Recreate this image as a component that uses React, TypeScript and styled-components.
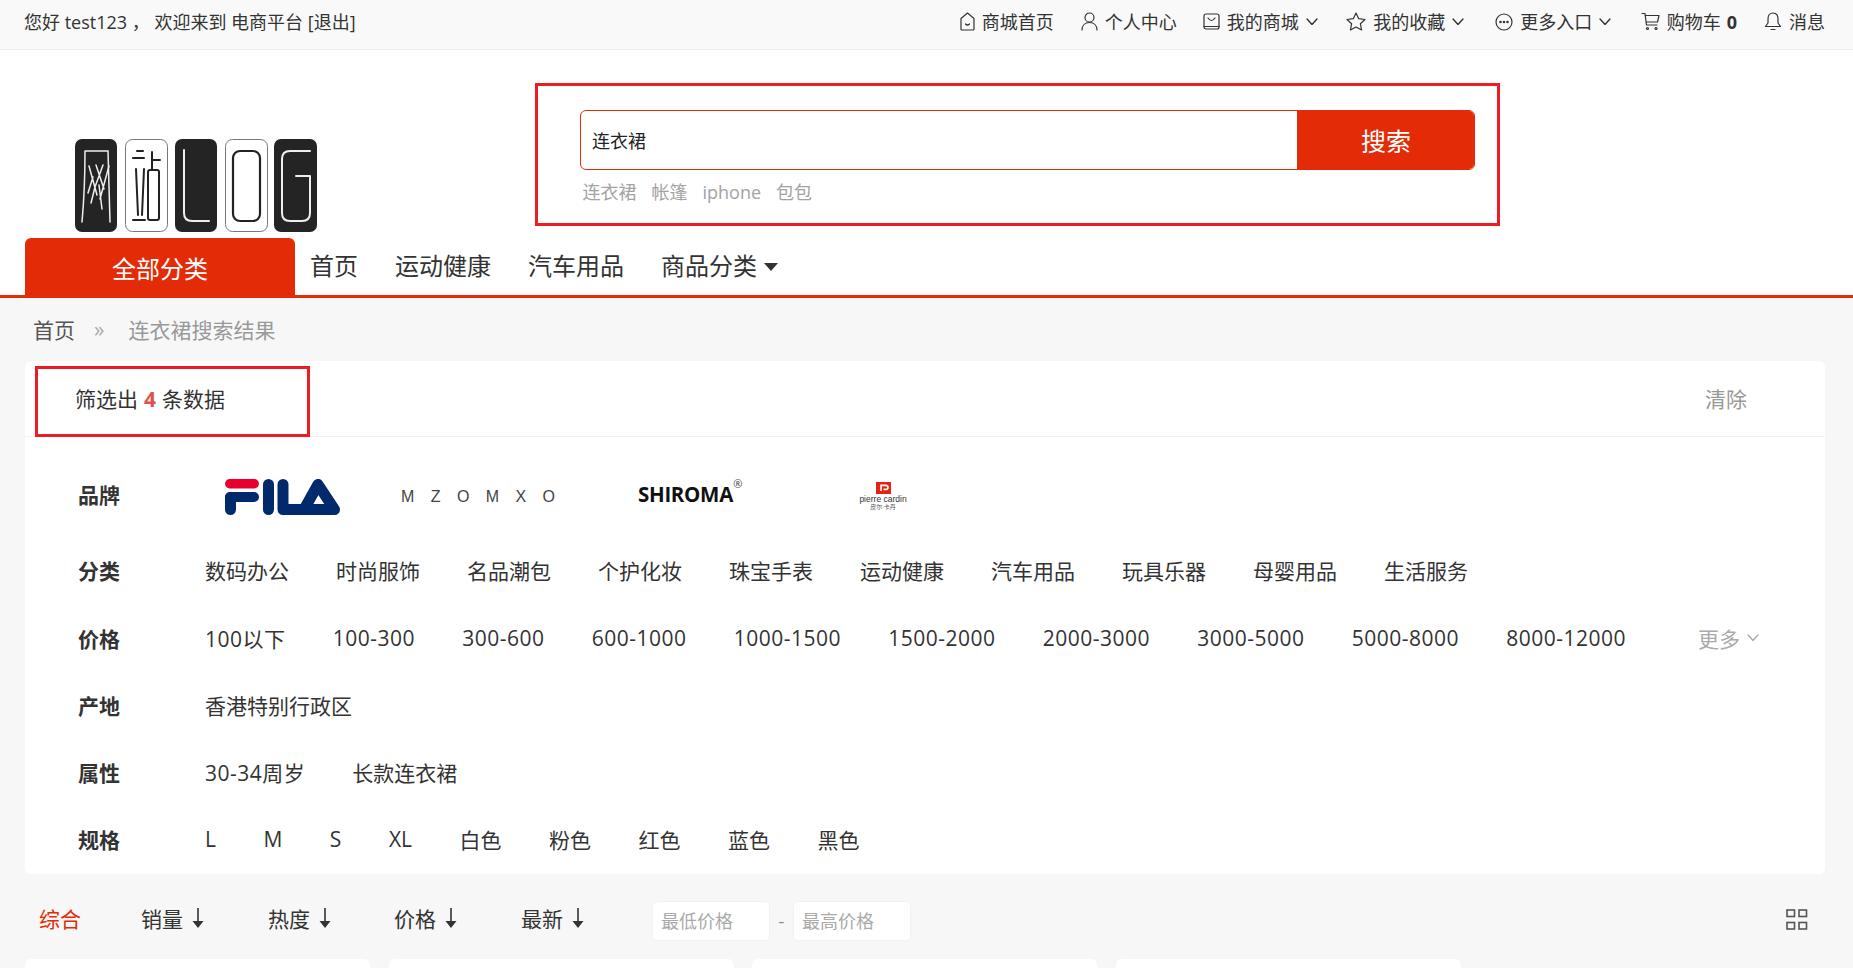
import React from "react";
import styled, { createGlobalStyle } from "styled-components";

const RED = "#e32c07";
const FONT = `"Open Sans", "Noto Sans CJK SC", sans-serif`;

const Global = createGlobalStyle`
  html, body { margin: 0; padding: 0; height: 100%; overflow: hidden; background: #f7f7f7; }
  body { font-family: ${FONT}; color: #333; }
  * { box-sizing: border-box; }
`;

const TopBar = styled.div`
  height: 50px; background: #f9f9f9; border-bottom: 1px solid #eee;
  display: flex; align-items: center; justify-content: space-between;
  padding: 0 28px 6px 24px; font-size: 18px; line-height: 26px;
`;
const TopLinks = styled.div`display: flex; align-items: center;`;
const TopLink = styled.span<{ $after?: number }>`
  display: inline-flex; align-items: center; gap: 7px;
  margin-right: ${(p) => p.$after ?? 0}px;
  svg { flex: none; }
`;
const Count = styled.b`font-weight: 700; margin-left: -1px;`;

const Header = styled.header`
  background: #fff; border-bottom: 3px solid ${RED}; padding: 0 0 0 25px;
`;
const HeaderMain = styled.div`display: flex; height: 188px;`;
const LogoBox = styled.div`margin: 89px 0 0 50px; width: 242px; height: 94px;`;
const SearchFrame = styled.div`
  margin: 33px 0 0 218px; width: 965px; height: 143px;
  border: 3px solid #ec1c24; padding: 24px 22px 0 42px;
`;
const SearchRow = styled.div`
  display: flex; height: 60px; border: 1px solid ${RED}; border-radius: 6px; overflow: hidden;
`;
const SearchText = styled.div`
  flex: 1; font-size: 18px; line-height: 60px; padding-left: 11px; color: #222;
`;
const SearchButton = styled.div`
  width: 178px; margin: -1px; background: ${RED}; color: #fff;
  font-size: 25px; line-height: 62px; text-align: center;
`;
const HotWords = styled.div`
  display: flex; gap: 15px; font-size: 18px; line-height: 26px; color: #a3a3a3;
  padding: 9px 0 0 2.5px;
`;
const NavRow = styled.nav`display: flex; align-items: center; height: 57px;`;
const AllCats = styled.div`
  width: 270px; height: 57px; background: ${RED}; color: #fff; border-radius: 6px 6px 0 0;
  text-align: center; font-size: 24px; line-height: 62px; margin-right: 15px;
`;
const NavItem = styled.span`
  font-size: 24px; line-height: 34px; color: #333; margin-right: 37px;
  display: inline-flex; align-items: center; position: relative; top: -1px;
`;
const Caret = styled.i`
  width: 0; height: 0; margin-left: 7px; margin-top: 2px;
  border-left: 7px solid transparent; border-right: 7px solid transparent; border-top: 8px solid #333;
`;

const Crumbs = styled.div`
  display: flex; align-items: center; height: 63px; padding: 0 0 1px 33px; font-size: 21px; color: #999;
`;
const CrumbHome = styled.span`color: #555;`;
const CrumbSep = styled.span`margin: 0 24px 0 19px; color: #aaa;`;

const Panel = styled.section`
  margin: 0 28px 0 25px; height: 513px; background: #fff; border-radius: 6px;
`;
const PanelHead = styled.div`
  position: relative; height: 76px; border-bottom: 1px solid #f1f1f1;
  display: flex; align-items: center; justify-content: space-between;
  padding: 0 78px 2px 50px; font-size: 21px;
`;
const HeadFrame = styled.div`
  position: absolute; left: 10px; top: 5px; width: 275px; height: 71px; border: 3px solid #ec1c24;
`;
const Num = styled.b`color: #e0514c; font-weight: 700; margin: 0 6px;`;
const Clear = styled.span`color: #999;`;
const PanelBody = styled.div`padding-top: 23px;`;
const Row = styled.div<{ $brand?: boolean }>`
  display: flex; align-items: center; height: 67.25px; padding: 0 66px 0 53px; font-size: 21px;
  white-space: nowrap;
  margin-bottom: ${(p) => (p.$brand ? 9.5 : 0)}px;
`;
const RowLabel = styled.span`width: 127px; flex: none; font-weight: 700;`;
const Values = styled.div<{ $gap?: number }>`
  display: flex; align-items: center; gap: ${(p) => p.$gap ?? 47}px; flex: 1;
`;
const Price = styled.span`letter-spacing: 0.5px;`;
const More = styled.span`
  margin-left: auto; color: #aaa; display: inline-flex; align-items: center; gap: 7px;
`;
const BrandList = styled.div`display: flex; align-items: center; height: 60px; flex: 1;`;
const BrandSlot = styled.div<{ $w: number; $down?: number }>`
  width: ${(p) => p.$w}px; flex: none; display: flex; align-items: center;
  padding-top: ${(p) => p.$down ?? 0}px;
`;
const Mzomxo = styled.span`
  font-family: "Liberation Sans", sans-serif; font-size: 16px; letter-spacing: 16.4px; color: #444; white-space: nowrap;
`;
const Shiroma = styled.span`
  font-family: "Open Sans", sans-serif; font-weight: 700; font-size: 20.5px; line-height: 15px; letter-spacing: -.3px; color: #111; position: relative;
`;
const Reg = styled.sup`position: absolute; right: -9px; top: -9px; font-size: 11px; font-weight: 400; line-height: 11px; color: #444;`;
const Pc = styled.div`display: flex; flex-direction: column; align-items: center; width: 44px;`;
const PcName = styled.span`font-family: "Liberation Sans", sans-serif; font-size: 8.5px; line-height: 9px; color: #333; white-space: nowrap; margin-top: 1px;`;
const PcCn = styled.span`font-size: 6px; line-height: 7px; color: #555; white-space: nowrap;`;

const SortBar = styled.div`
  display: flex; align-items: center; height: 84px; margin: 0 45px 0 39px; padding-top: 9px; font-size: 21px;
`;
const SortItem = styled.span<{ $active?: boolean; $w: number }>`
  width: ${(p) => p.$w}px; flex: none; display: inline-flex; align-items: center; gap: 9px;
  padding-bottom: 6px;
  color: ${(p) => (p.$active ? RED : "#333")};
`;
const PriceBox = styled.div`
  width: 118px; height: 40px; background: #fff; border: 1px solid #f2f2f2; border-radius: 5px;
  font-size: 18px; line-height: 38px; color: #aaa; padding-left: 8px;
`;
const Dash = styled.span`width: 23px; text-align: center; color: #888; font-size: 18px;`;
const GridIcon = styled.span`margin-left: auto; display: flex; padding-bottom: 2px;`;

const Cards = styled.div`display: flex; gap: 18.5px; margin: 1px 0 0 25px;`;
const Card = styled.div`width: 345px; height: 300px; background: #fff; border-radius: 6px;`;

const line = { fill: "none", stroke: "#333", strokeWidth: 1.2, strokeLinecap: "round", strokeLinejoin: "round" } as const;

const HomeIcon = () => (
  <svg width="15" height="19" viewBox="0 0 15 19" {...line}>
    <path d="M7.5 1 L14 6.5 V17 Q14 18 13 18 H2 Q1 18 1 17 V6.5 Z" />
    <path d="M5.5 12 Q7.5 14 9.5 12" />
  </svg>
);
const UserIcon = () => (
  <svg width="17" height="19" viewBox="0 0 17 19" {...line}>
    <circle cx="8.5" cy="5.5" r="4.5" />
    <path d="M1 18 C1 13.5 4 10.5 8.5 10.5 S16 13.5 16 18" />
  </svg>
);
const BagIcon = () => (
  <svg width="17" height="17" viewBox="0 0 17 17" {...line}>
    <rect x="1" y="1" width="15" height="15" rx="2" />
    <path d="M5 5 Q8.5 10 12 5" />
    <path d="M1 13.5 H16" />
  </svg>
);
const StarIcon = () => (
  <svg width="20" height="19" viewBox="0 0 20 19" {...line}>
    <path d="M10 1 L12.7 6.7 L19 7.5 L14.4 11.8 L15.6 18 L10 15 L4.4 18 L5.6 11.8 L1 7.5 L7.3 6.7 Z" />
  </svg>
);
const MoreIcon = () => (
  <svg width="18" height="18" viewBox="0 0 18 18" {...line}>
    <circle cx="9" cy="9" r="8" />
    <circle cx="5.5" cy="9" r=".7" fill="#333" />
    <circle cx="9" cy="9" r=".7" fill="#333" />
    <circle cx="12.5" cy="9" r=".7" fill="#333" />
  </svg>
);
const CartIcon = () => (
  <svg width="19" height="19" viewBox="0 0 19 19" {...line}>
    <path d="M1 1.5 H4 L5.5 13 H16" />
    <path d="M4.3 3.5 H18 L16.5 10 H5.2" />
    <circle cx="6.5" cy="16.5" r="1" />
    <circle cx="15" cy="16.5" r="1" />
  </svg>
);
const BellIcon = () => (
  <svg width="18" height="19" viewBox="0 0 18 19" {...line}>
    <path d="M9 1 C5 1 4 4 4 7 V11 L1.5 14.5 H16.5 L14 11 V7 C14 4 13 1 9 1 Z" />
    <path d="M7 17.5 H11" />
  </svg>
);
const Chevron = ({ color = "#333", w = 12 }: { color?: string; w?: number }) => (
  <svg width={w} height={w * 0.62} viewBox="0 0 12 7.5" fill="none" stroke={color} strokeWidth="1.4" strokeLinecap="round" strokeLinejoin="round">
    <path d="M1 1 L6 6.5 L11 1" />
  </svg>
);
const DownArrow = () => (
  <svg width="12" height="20" viewBox="0 0 12 20">
    <rect x="5.2" y="0" width="1.6" height="14" fill="#333" />
    <path d="M0.5 13 H11.5 L6 20 Z" fill="#333" />
  </svg>
);
const Grid = () => (
  <svg width="22" height="21" viewBox="0 0 22 21" fill="none" stroke="#555" strokeWidth="1.6">
    <rect x="1" y="1" width="7.5" height="6.5" />
    <rect x="13" y="1" width="7.5" height="6.5" />
    <rect x="1" y="13.5" width="7.5" height="6.5" />
    <rect x="13" y="13.5" width="7.5" height="6.5" />
  </svg>
);

const Logo = () => (
  <svg width="242" height="94" viewBox="0 0 242 94" fill="none" role="img" aria-label="网站LOG">
    <rect x="0" y="0" width="42" height="93" rx="7" fill="#242424" />
    <rect x="50.5" y="0.5" width="42" height="92" rx="7" fill="#fff" stroke="#777" />
    <rect x="100" y="0" width="42" height="93" rx="7" fill="#242424" />
    <rect x="150.5" y="0.5" width="42" height="92" rx="7" fill="#fff" stroke="#777" />
    <rect x="199" y="0" width="43" height="93" rx="7" fill="#242424" />
    <g stroke="#eee" strokeWidth="1.5" strokeLinecap="round">
      <path d="M10 12 H33 L35 83 M10 12 Q10 50 7 83" />
      <path d="M14 27 L22 56 M21 26 L29 50 M28 26 L20 48 L16 64 M34 27 L25 60 M18 38 L13 54 M24 46 L27 70" />
    </g>
    <g stroke="#222" strokeWidth="2" strokeLinecap="round" strokeLinejoin="round">
      <path d="M62 12 H68 M58 19 H69 M61 30 L63 76 M69 30 L67 76 M58 81 H70" />
      <path d="M77 13 V30 M77 21 H85" />
      <rect x="73" y="31" width="11" height="50" rx="2" />
    </g>
    <path d="M109 11 V74 Q109 82 117 82 H134" stroke="#eee" strokeWidth="2" strokeLinecap="round" />
    <rect x="158" y="12" width="27" height="70" rx="7" stroke="#222" strokeWidth="2.2" />
    <path d="M235 12 H215 Q207 12 207 20 V74 Q207 82 215 82 H227 Q235 82 235 74 V37 H221" stroke="#eee" strokeWidth="2" strokeLinecap="round" strokeLinejoin="round" />
  </svg>
);

const Fila = () => (
  <svg width="115" height="36" viewBox="0 0 115 36" role="img" aria-label="FILA">
    <rect x="0" y="0" width="34" height="9.5" rx="4.7" fill="#e8002d" />
    <g fill="#002a6b">
      <rect x="0" y="13" width="34" height="10" rx="5" />
      <rect x="0" y="13" width="11" height="23" rx="5.5" />
      <rect x="38" y="0" width="11" height="36" rx="5.5" />
    </g>
    <polyline points="58,5.5 58,30.5 109.5,30.5 93,5.5 79,30.5" fill="none" stroke="#002a6b" strokeWidth="11" strokeLinejoin="round" strokeLinecap="round" />
  </svg>
);

const PcMark = () => (
  <svg width="15" height="12" viewBox="0 0 15 12">
    <rect width="15" height="12" fill="#e42313" />
    <path d="M5 9 V3.4 H9.5 Q12 3.4 12 5.4 Q12 7.4 9.5 7.4 H7.5" fill="none" stroke="#fff" strokeWidth="1.6" />
  </svg>
);

const TopNav = [
  { icon: <HomeIcon />, label: "商城首页", after: 27 },
  { icon: <UserIcon />, label: "个人中心", after: 26 },
  { icon: <BagIcon />, label: "我的商城", more: true, after: 28.5 },
  { icon: <StarIcon />, label: "我的收藏", more: true, after: 31 },
  { icon: <MoreIcon />, label: "更多入口", more: true, after: 29.5 },
];

const cats = ["数码办公", "时尚服饰", "名品潮包", "个护化妆", "珠宝手表", "运动健康", "汽车用品", "玩具乐器", "母婴用品", "生活服务"];
const prices = ["100以下", "100-300", "300-600", "600-1000", "1000-1500", "1500-2000", "2000-3000", "3000-5000", "5000-8000", "8000-12000"];
const specs = ["L", "M", "S", "XL", "白色", "粉色", "红色", "蓝色", "黑色"];

export default function App() {
  return (
    <>
      <Global />
      <TopBar>
        <span>您好 test123 ， 欢迎来到 电商平台 [退出]</span>
        <TopLinks>
          {TopNav.map((n) => (
            <TopLink key={n.label} $after={n.after}>
              {n.icon}
              {n.label}
              {n.more && <Chevron />}
            </TopLink>
          ))}
          <TopLink $after={27}>
            <CartIcon />
            购物车 <Count>0</Count>
          </TopLink>
          <TopLink>
            <BellIcon />
            消息
          </TopLink>
        </TopLinks>
      </TopBar>
      <Header>
        <HeaderMain>
          <LogoBox><Logo /></LogoBox>
          <SearchFrame>
            <SearchRow>
              <SearchText>连衣裙</SearchText>
              <SearchButton>搜索</SearchButton>
            </SearchRow>
            <HotWords>
              <span>连衣裙</span><span>帐篷</span><span>iphone</span><span>包包</span>
            </HotWords>
          </SearchFrame>
        </HeaderMain>
        <NavRow>
          <AllCats>全部分类</AllCats>
          <NavItem>首页</NavItem>
          <NavItem>运动健康</NavItem>
          <NavItem>汽车用品</NavItem>
          <NavItem>商品分类<Caret /></NavItem>
        </NavRow>
      </Header>
      <Crumbs>
        <CrumbHome>首页</CrumbHome><CrumbSep>»</CrumbSep><span>连衣裙搜索结果</span>
      </Crumbs>
      <Panel>
        <PanelHead>
          <HeadFrame />
          <span>筛选出<Num>4</Num>条数据</span>
          <Clear>清除</Clear>
        </PanelHead>
        <PanelBody>
          <Row $brand>
            <RowLabel>品牌</RowLabel>
            <BrandList>
              <BrandSlot $w={20} />
              <BrandSlot $w={176} $down={6}><Fila /></BrandSlot>
              <BrandSlot $w={237} $down={6}><Mzomxo>MZOMXO</Mzomxo></BrandSlot>
              <BrandSlot $w={223} $down={2}><Shiroma>SHIROMA<Reg>®</Reg></Shiroma></BrandSlot>
              <BrandSlot $w={60} $down={5}>
                <Pc><PcMark /><PcName>pierre cardin</PcName><PcCn>皮尔·卡丹</PcCn></Pc>
              </BrandSlot>
            </BrandList>
          </Row>
          <Row>
            <RowLabel>分类</RowLabel>
            <Values>{cats.map((c) => <span key={c}>{c}</span>)}</Values>
          </Row>
          <Row>
            <RowLabel>价格</RowLabel>
            <Values $gap={47.2}>
              {prices.map((c) => <Price key={c}>{c}</Price>)}
              <More>更多<Chevron color="#aaa" w={12} /></More>
            </Values>
          </Row>
          <Row>
            <RowLabel>产地</RowLabel>
            <Values><span>香港特别行政区</span></Values>
          </Row>
          <Row>
            <RowLabel>属性</RowLabel>
            <Values><Price>30-34周岁</Price><span>长款连衣裙</span></Values>
          </Row>
          <Row>
            <RowLabel>规格</RowLabel>
            <Values $gap={47.5}>{specs.map((c) => <span key={c}>{c}</span>)}</Values>
          </Row>
        </PanelBody>
      </Panel>
      <SortBar>
        <SortItem $active $w={102}>综合</SortItem>
        <SortItem $w={127}>销量<DownArrow /></SortItem>
        <SortItem $w={126}>热度<DownArrow /></SortItem>
        <SortItem $w={127}>价格<DownArrow /></SortItem>
        <SortItem $w={131}>最新<DownArrow /></SortItem>
        <PriceBox>最低价格</PriceBox>
        <Dash>-</Dash>
        <PriceBox>最高价格</PriceBox>
        <GridIcon><Grid /></GridIcon>
      </SortBar>
      <Cards>
        <Card /><Card /><Card /><Card />
      </Cards>
    </>
  );
}
